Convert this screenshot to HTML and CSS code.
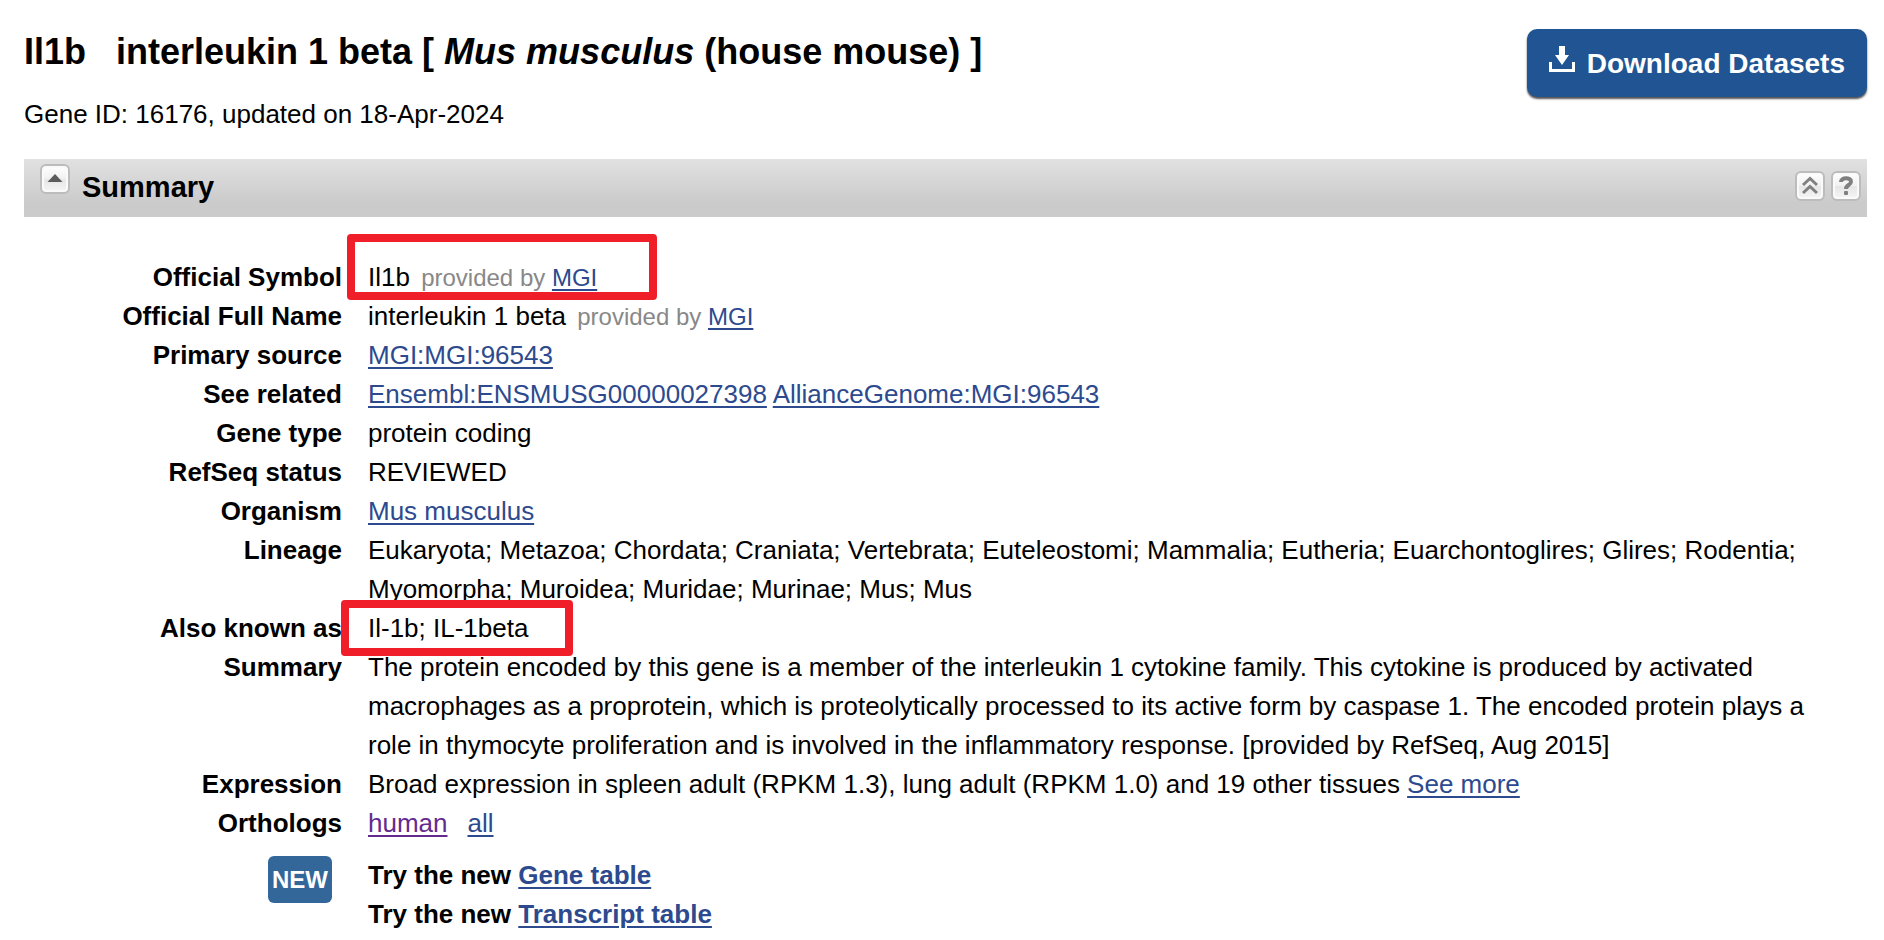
FILE: index.html
```html
<!DOCTYPE html>
<html lang="en">
<head>
<meta charset="utf-8">
<title>Il1b interleukin 1 beta - Gene</title>
<link rel="stylesheet" href="styles.css">
</head>
<body>
<main class="page">
  <header class="gene-header">
    <div class="gene-heading">
      <h1 class="gene-title">Il1b&nbsp;&nbsp; interleukin 1 beta [ <em>Mus musculus</em> (house mouse) ]</h1>
      <p class="gene-id">Gene ID: 16176, updated on 18-Apr-2024</p>
    </div>
    <button class="download" type="button">
      <svg class="download-icon" viewBox="0 0 26 26" aria-hidden="true">
        <path fill="#fff" d="M10 0h6v9h4l-7 10-7-10h4z"/>
        <path fill="none" stroke="#fff" stroke-width="3" d="M1.500 16v8.500h23V16"/>
      </svg>
      <span>Download Datasets</span>
    </button>
  </header>

  <section class="summary">
    <div class="section-bar">
      <button class="tool toggle" type="button" aria-label="Collapse section">
        <svg viewBox="0 0 26 26" aria-hidden="true"><path fill="#5c5c5c" d="M13 8l7.500 8h-15z"/></svg>
      </button>
      <h2 class="section-title">Summary</h2>
      <div class="section-tools">
        <button class="tool" type="button" aria-label="Go to the top of the page">
          <svg viewBox="0 0 26 26" aria-hidden="true"><path fill="none" stroke="#808080" stroke-width="3" d="M6 12l7-6.500 7 6.500M6 20l7-6.500 7 6.500"/></svg>
        </button>
        <button class="tool" type="button" aria-label="Help">
          <svg viewBox="0 0 26 26" aria-hidden="true"><path fill="none" stroke="#808080" stroke-width="4" d="M8 9C8 4 18 4 18 8.500c0 4-5 3-5 7.500"/><rect x="11" y="18" width="4" height="4" rx="1" fill="#808080"/></svg>
        </button>
      </div>
    </div>

    <dl class="facts">
      <dt>Official Symbol</dt>
      <dd class="marked">Il1b <span class="source">provided by <a href="#mgi">MGI</a></span><span class="mark mark-symbol"></span></dd>
      <dt>Official Full Name</dt>
      <dd>interleukin 1 beta <span class="source">provided by <a href="#mgi">MGI</a></span></dd>
      <dt>Primary source</dt>
      <dd><a href="#mgi-96543">MGI:MGI:96543</a></dd>
      <dt>See related</dt>
      <dd><a href="#ensembl">Ensembl:ENSMUSG00000027398</a> <a href="#alliance">AllianceGenome:MGI:96543</a></dd>
      <dt>Gene type</dt>
      <dd>protein coding</dd>
      <dt>RefSeq status</dt>
      <dd>REVIEWED</dd>
      <dt>Organism</dt>
      <dd><a href="#organism">Mus musculus</a></dd>
      <dt>Lineage</dt>
      <dd>Eukaryota; Metazoa; Chordata; Craniata; Vertebrata; Euteleostomi; Mammalia; Eutheria; Euarchontoglires; Glires; Rodentia; Myomorpha; Muroidea; Muridae; Murinae; Mus; Mus</dd>
      <dt>Also known as</dt>
      <dd class="marked">Il-1b; IL-1beta<span class="mark mark-alias"></span></dd>
      <dt>Summary</dt>
      <dd>The protein encoded by this gene is a member of the interleukin 1 cytokine family. This cytokine is produced by activated macrophages as a proprotein, which is proteolytically processed to its active form by caspase 1. The encoded protein plays a role in thymocyte proliferation and is involved in the inflammatory response. [provided by RefSeq, Aug 2015]</dd>
      <dt>Expression</dt>
      <dd>Broad expression in spleen adult (RPKM 1.3), lung adult (RPKM 1.0) and 19 other tissues <a href="#expression">See more</a></dd>
      <dt>Orthologs</dt>
      <dd class="orthologs"><a class="seen" href="#human">human</a><a href="#all">all</a></dd>
      <dt class="promo-label"><span class="badge">NEW</span></dt>
      <dd class="promo">
        <div>Try the new <a href="#gene-table">Gene table</a></div>
        <div>Try the new <a href="#transcript-table">Transcript table</a></div>
      </dd>
    </dl>
  </section>
</main>
</body>
</html>
```

FILE: styles.css
```css
* {
  box-sizing: border-box;
}

body {
  margin: 0;
  background: #fff;
  color: #000;
  font-family: "Liberation Sans", Arial, Helvetica, sans-serif;
  font-size: 26px;
  line-height: 39px;
}

h1, h2, p, dl, dt, dd {
  margin: 0;
}

a {
  color: #2d4a8e;
  text-decoration-thickness: 2px;
  text-underline-offset: 3px;
}

a.seen {
  color: #642a8f;
}

.page {
  padding: 29px 17px 0 24px;
}

.gene-header {
  display: flex;
  justify-content: space-between;
  align-items: flex-start;
}

.gene-title {
  font-size: 36px;
  line-height: 46px;
}

.gene-id {
  margin-top: 20px;
}

.download {
  display: flex;
  gap: 12px;
  height: 68px;
  padding: 13px 22px 0;
  border: 0;
  border-radius: 10px;
  background: #205493;
  box-shadow: 0 2px 2px #555;
  color: #fff;
  font-family: inherit;
  font-size: 28px;
  font-weight: bold;
  line-height: 43px;
}

.download-icon {
  width: 26px;
  height: 26px;
  margin-top: 4px;
}

.summary {
  margin-top: 25px;
}

.section-bar {
  display: flex;
  align-items: flex-start;
  height: 58px;
  padding: 0 6px 0 16px;
  background: linear-gradient(#e1e1e1, #cbcbcb 75%, #cbcbcb);
}

.section-title {
  margin: 9px 0 0 12px;
  font-size: 29px;
  line-height: 39px;
}

.section-tools {
  display: flex;
  gap: 6px;
  margin: 12px 0 0 auto;
}

.tool {
  width: 30px;
  height: 30px;
  padding: 0;
  border: 2px solid #bcbcbc;
  border-radius: 6px;
  background: linear-gradient(#fff, #f0f0f0 50%, #e6e6e6 52%, #f6f6f6);
  box-shadow: inset 0 0 0 2px #fafafa;
}

.tool svg {
  display: block;
  width: 26px;
  height: 26px;
}

.toggle {
  margin-top: 5px;
}

.facts {
  display: grid;
  grid-template-columns: 318px 1fr;
  column-gap: 26px;
  padding: 41px 26px 0 0;
}

.facts dt {
  font-weight: bold;
  text-align: right;
}

.source {
  margin-left: 4px;
  color: #888;
  font-size: 24px;
}

.marked {
  position: relative;
}

.mark {
  position: absolute;
  border: 8px solid #f01e28;
  border-radius: 4px;
}

.mark-symbol {
  top: -24px;
  left: -21px;
  width: 310px;
  height: 66px;
}

.mark-alias {
  top: -9px;
  left: -27px;
  width: 232px;
  height: 56px;
}

.orthologs {
  display: flex;
  gap: 20px;
}

.facts .promo-label {
  display: flex;
  justify-content: flex-end;
  align-items: flex-start;
  padding: 13px 10px 0 0;
}

.badge {
  padding: 4px;
  border-radius: 6px;
  background: #336699;
  color: #fff;
  font-size: 24px;
}

.promo {
  padding-top: 13px;
  font-weight: bold;
}
```
